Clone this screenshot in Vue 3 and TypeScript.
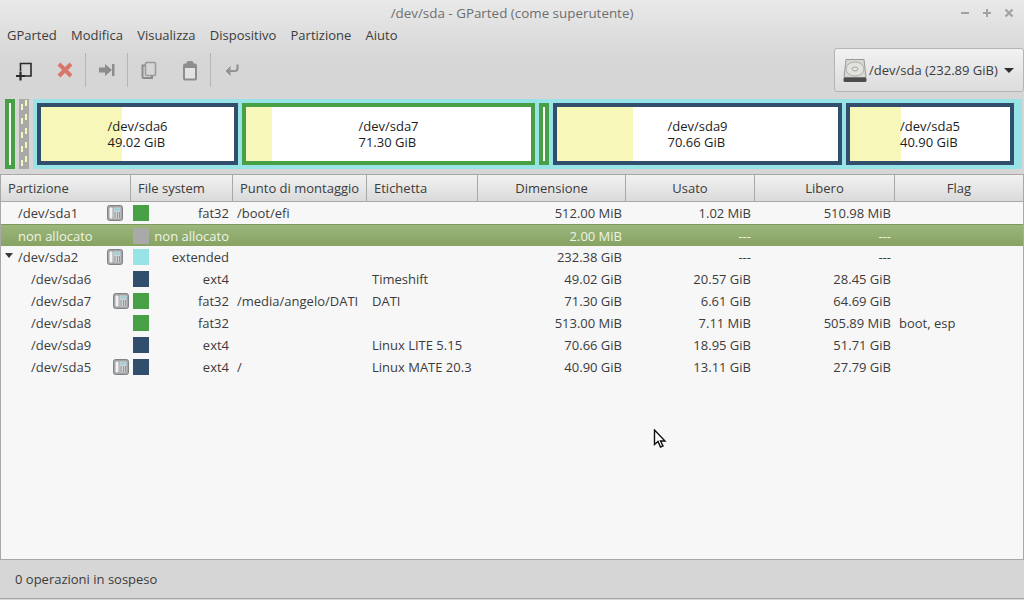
<template>
  <div class="window">
    <div class="titlebar">
      <span class="title">/dev/sda - GParted (come superutente)</span>
      <div class="win-buttons">
        <svg width="10" height="10" viewBox="0 0 10 10"><path d="M1 5h8" stroke="#a2a2a2" stroke-width="2" /></svg>
        <svg width="10" height="10" viewBox="0 0 10 10"><path d="M1 5h8M5 1v8" stroke="#a2a2a2" stroke-width="2" /></svg>
        <svg width="10" height="10" viewBox="0 0 10 10"><path d="M1.5 1.5l7 7M8.5 1.5l-7 7" stroke="#a2a2a2" stroke-width="2.2" /></svg>
      </div>
    </div>

    <nav class="menubar">
      <span v-for="m in menus" :key="m">{{ m }}</span>
    </nav>

    <div class="toolbar">
      <div class="tools">
        <button class="tool">
          <svg width="22" height="22" viewBox="0 0 22 22" fill="none" stroke="#2b2b2b">
            <path d="M7.500 12V4.500h10.500v12.500h-6" stroke-width="1.600" />
            <path d="M3 17h9M7.500 12.500v9" stroke-width="2.200" />
          </svg>
        </button>
        <button class="tool">
          <svg width="22" height="22" viewBox="0 0 22 22"><path d="M5 5l12 12M17 5L5 17" stroke="#d9766a" stroke-width="4" /></svg>
        </button>
        <i class="sep"></i>
        <button class="tool">
          <svg width="22" height="22" viewBox="0 0 22 22" fill="#8c8c8c"><path d="M3 8.500h6V5l7 6-7 6v-3.500H3z" /><rect x="16" y="5" width="2.500" height="12" /></svg>
        </button>
        <i class="sep"></i>
        <button class="tool">
          <svg width="22" height="22" viewBox="0 0 22 22" fill="none" stroke="#9a9a9a" stroke-width="1.500">
            <rect x="7.500" y="3.500" width="10" height="13" rx="1" />
            <path d="M7 6.500H4.500v11.500a1 1 0 0 0 1 1h8.500v-2.500" stroke="#8c8c8c" stroke-width="2" />
          </svg>
        </button>
        <button class="tool">
          <svg width="22" height="22" viewBox="0 0 22 22">
            <rect x="4" y="4.500" width="14" height="17" rx="2" fill="#8d8d8d" />
            <rect x="7.500" y="2" width="7" height="5" rx="2" fill="#8d8d8d" />
            <rect x="6" y="9" width="10" height="10.500" fill="#e2e2e2" />
          </svg>
        </button>
        <i class="sep"></i>
        <button class="tool">
          <svg width="22" height="22" viewBox="0 0 22 22" fill="none" stroke="#939393" stroke-width="2.200">
            <path d="M16.500 5.500v4a2.500 2.500 0 0 1-2.500 2.500H7" />
            <path d="M9.500 7.500L5 12l4.500 4.500" fill="#939393" stroke-width="1" />
          </svg>
        </button>
      </div>
      <button class="device">
        <svg width="25" height="25" viewBox="0 0 25 25">
          <path d="M3 1.500h18l2 18H1z" fill="#d8d8d3" stroke="#9a9a96" />
          <ellipse cx="12" cy="11" rx="9" ry="7" fill="#e2e2de" stroke="#adada9" />
          <ellipse cx="12" cy="11" rx="3" ry="2" fill="none" stroke="#a5a5a1" />
          <rect x="0.500" y="19.500" width="23" height="4.500" rx="1.500" fill="#4d4d4d" />
        </svg>
        <span>/dev/sda (232.89 GiB)</span>
        <i class="caret"></i>
      </button>
    </div>

    <section class="diskmap">
      <div class="part solo fat"></div>
      <div class="part solo unalloc"></div>
      <div class="extended">
        <div
          v-for="p in bars"
          :key="p.name"
          class="part"
          :class="p.fs"
          :style="{ width: p.width + 'px' }"
        >
          <div class="usage" :style="{ width: p.used + 'px' }"></div>
          <div v-if="p.name" class="bar-label">{{ p.name }}<br />{{ p.size }}</div>
        </div>
      </div>
    </section>

    <main class="table">
      <div class="row head">
        <div v-for="h in headers" :key="h.label" :class="{ center: h.center }">{{ h.label }}</div>
      </div>
      <div
        v-for="r in rows"
        :key="r.name"
        class="row body"
        :class="{ selected: r.selected }"
      >
        <div class="c-part" :class="{ child: r.child }">
          <i v-if="r.open" class="expander"></i>
          <span>{{ r.name }}</span>
          <svg v-if="r.lock" class="key" width="16" height="16" viewBox="0 0 16 16">
            <rect x="0.500" y="0.500" width="15" height="15" rx="2" fill="#a3a5a6" stroke="#808385" />
            <rect x="2.500" y="2.500" width="3" height="11" rx="1" fill="#f1f2f3" />
            <rect x="6.500" y="2.500" width="7" height="11" fill="#d0d2d3" />
            <rect x="7.500" y="3.500" width="5" height="2" fill="#8fd0e2" />
            <path d="M7.500 8h1M10 8h1M12 8h1M7.500 10h1M10 10h1M12 10h1M7.500 12h1M10 12h1M12 12h1" stroke="#55595c" />
          </svg>
        </div>
        <div class="c-fs">
          <i class="swatch" :class="r.color"></i>
          <span>{{ r.fs }}</span>
        </div>
        <div class="c-text">{{ r.mount }}</div>
        <div class="c-text label">{{ r.label }}</div>
        <div class="c-num">{{ r.size }}</div>
        <div class="c-num">{{ r.used }}</div>
        <div class="c-num">{{ r.free }}</div>
        <div class="c-text">{{ r.flag }}</div>
      </div>

      <svg class="cursor" width="14" height="20" viewBox="0 0 14 20">
        <path d="M1.500 1v14.500l3.500-3 2.500 5.500 2.500-1-2.500-5h4.500z" fill="#fff" stroke="#111" stroke-width="1.400" />
      </svg>
    </main>

    <footer class="statusbar">0 operazioni in sospeso</footer>
  </div>
</template>

<script setup lang="ts">
interface Row {
  name: string
  fs: string
  color: string
  mount?: string
  label?: string
  size: string
  used: string
  free: string
  flag?: string
  lock?: boolean
  child?: boolean
  open?: boolean
  selected?: boolean
}

const menus = ['GParted', 'Modifica', 'Visualizza', 'Dispositivo', 'Partizione', 'Aiuto']

const headers = [
  { label: 'Partizione' },
  { label: 'File system' },
  { label: 'Punto di montaggio' },
  { label: 'Etichetta' },
  { label: 'Dimensione', center: true },
  { label: 'Usato', center: true },
  { label: 'Libero', center: true },
  { label: 'Flag', center: true }
]

const bars = [
  { name: '/dev/sda6', size: '49.02 GiB', fs: 'ext4', width: 201, used: 81 },
  { name: '/dev/sda7', size: '71.30 GiB', fs: 'fat', width: 293, used: 26 },
  { name: '', size: '', fs: 'fat thin', width: 10, used: 0 },
  { name: '/dev/sda9', size: '70.66 GiB', fs: 'ext4', width: 289, used: 76 },
  { name: '/dev/sda5', size: '40.90 GiB', fs: 'ext4', width: 168, used: 51 }
]

const rows: Row[] = [
  { name: '/dev/sda1', fs: 'fat32', color: 'green', mount: '/boot/efi', size: '512.00 MiB', used: '1.02 MiB', free: '510.98 MiB', lock: true },
  { name: 'non allocato', fs: 'non allocato', color: 'grey', size: '2.00 MiB', used: '---', free: '---', selected: true },
  { name: '/dev/sda2', fs: 'extended', color: 'cyan', size: '232.38 GiB', used: '---', free: '---', lock: true, open: true },
  { name: '/dev/sda6', fs: 'ext4', color: 'navy', label: 'Timeshift', size: '49.02 GiB', used: '20.57 GiB', free: '28.45 GiB', child: true },
  { name: '/dev/sda7', fs: 'fat32', color: 'green', mount: '/media/angelo/DATI', label: 'DATI', size: '71.30 GiB', used: '6.61 GiB', free: '64.69 GiB', lock: true, child: true },
  { name: '/dev/sda8', fs: 'fat32', color: 'green', size: '513.00 MiB', used: '7.11 MiB', free: '505.89 MiB', flag: 'boot, esp', child: true },
  { name: '/dev/sda9', fs: 'ext4', color: 'navy', label: 'Linux LITE 5.15', size: '70.66 GiB', used: '18.95 GiB', free: '51.71 GiB', child: true },
  { name: '/dev/sda5', fs: 'ext4', color: 'navy', mount: '/', label: 'Linux MATE 20.3', size: '40.90 GiB', used: '13.11 GiB', free: '27.79 GiB', lock: true, child: true }
]
</script>

<style>
html,
body {
  margin: 0;
  background: #d6d6d6;
}
</style>

<style scoped>
.window {
  width: 1024px;
  height: 600px;
  display: flex;
  flex-direction: column;
  overflow: hidden;
  font-family: 'Open Sans', 'Noto Sans', sans-serif;
  font-size: 13px;
  color: #3c3c3c;
  background: linear-gradient(180deg, #e9e9e9 0, #d6d6d6 60px);
}

.titlebar {
  height: 26px;
  flex: none;
  display: flex;
  align-items: center;
  justify-content: center;
  position: relative;
  color: #6e6e6e;
  font-size: 13.400px;
}

.win-buttons {
  position: absolute;
  right: 10px;
  top: 8px;
  display: flex;
  gap: 12px;
}

.win-buttons svg {
  display: block;
}

.menubar {
  height: 18px;
  flex: none;
  display: flex;
  align-items: center;
  gap: 14.300px;
  padding-left: 7px;
}

.toolbar {
  height: 50px;
  flex: none;
  display: flex;
  align-items: center;
  justify-content: space-between;
  padding-top: 2px;
  box-sizing: border-box;
}

.tools {
  display: flex;
  align-items: center;
  padding-left: 3px;
}

.tool {
  width: 41px;
  height: 34px;
  padding: 0;
  border: 0;
  background: none;
  display: flex;
  align-items: center;
  justify-content: center;
}

.sep {
  width: 1px;
  height: 34px;
  background: #b5b5b5;
}

.device {
  width: 190px;
  height: 44px;
  padding: 0 8px;
  display: flex;
  align-items: center;
  gap: 1px;
  border: 1px solid #b4b4b4;
  border-radius: 3px;
  background: linear-gradient(180deg, #f2f2f2, #dcdcdc);
  font: inherit;
  color: inherit;
  box-sizing: border-box;
}

.caret {
  width: 0;
  height: 0;
  margin-left: 5px;
  border: 5px solid transparent;
  border-top: 5px solid #2e2e2e;
  border-bottom: 0;
}

.diskmap {
  height: 80px;
  flex: none;
  display: flex;
  align-items: flex-start;
  gap: 4px;
  padding: 5px 0 0 5px;
  box-sizing: border-box;
}

.extended {
  width: 989px;
  height: 70px;
  padding: 4px 8px 4px 4px;
  display: flex;
  gap: 4px;
  background: #97e3e6;
  box-sizing: border-box;
}

.part {
  position: relative;
  height: 62px;
  background: #fff;
  border: 4px solid;
  box-sizing: border-box;
  display: flex;
  align-items: center;
  justify-content: center;
  overflow: hidden;
}

.part.solo {
  width: 10px;
  height: 70px;
}

.part.fat {
  border-color: #47a046;
}

.part.ext4 {
  border-color: #314e6c;
}

.part.unalloc {
  border: 1px solid #a9a9a9;
  background:
    repeating-linear-gradient(180deg, #f7f7b9 0 6px, transparent 6px 14px) 1px 4px / 2px 100% no-repeat,
    repeating-linear-gradient(180deg, #f7f7b9 0 6px, transparent 6px 14px) 5px 0 / 2px 100% no-repeat,
    #a9a9a9;
}

.usage {
  position: absolute;
  left: 0;
  top: 0;
  bottom: 0;
  background: #f7f7b9;
}

.bar-label {
  position: relative;
  color: #1c1c1c;
  line-height: 16px;
}

.table {
  flex: 1;
  position: relative;
  background: #f7f7f7;
  border: 1px solid #a8a8a8;
}

.row {
  display: grid;
  grid-template-columns: 130px 102px 134px 111px 148px 129px 140px 1fr;
  align-items: center;
}

.head {
  height: 26px;
  border-bottom: 1px solid #a8a8a8;
  background: linear-gradient(180deg, #f2f2f2, #dadada);
}

.head > div {
  height: 100%;
  display: flex;
  align-items: center;
  padding-left: 7px;
  border-right: 1px solid #a8a8a8;
  box-sizing: border-box;
}

.head > div:last-child {
  border-right: 0;
}

.head > .center {
  justify-content: center;
  padding-left: 0;
}

.body {
  height: 22px;
}

.selected {
  color: #eef3e6;
  background: linear-gradient(180deg, #9cb67b, #86a362);
  border-top: 1px solid #7f9a5c;
  box-sizing: border-box;
}

.c-part {
  position: relative;
  padding-left: 17px;
}

.c-part.child {
  padding-left: 30px;
}

.expander {
  position: absolute;
  left: 4px;
  top: 5px;
  border: 4px solid transparent;
  border-top: 5px solid #3a3a3a;
  border-bottom: 0;
}

.key {
  position: absolute;
  left: 106px;
  top: 1px;
}

.child .key {
  left: 112px;
}

.c-fs {
  display: flex;
  align-items: center;
  justify-content: space-between;
  padding: 0 4px 0 2px;
  white-space: nowrap;
}

.swatch {
  width: 16px;
  height: 16px;
  flex: none;
}

.swatch.green {
  background: #47a046;
}

.swatch.grey {
  background: #a9a9a9;
}

.swatch.cyan {
  background: #97e3e6;
}

.swatch.navy {
  background: #314e6c;
}

.c-text {
  padding-left: 4px;
  white-space: nowrap;
}

.c-text.label {
  padding-left: 5px;
}

.c-num {
  text-align: right;
  padding-right: 4px;
}

.cursor {
  position: absolute;
  left: 652px;
  top: 254px;
}

.statusbar {
  height: 39px;
  flex: none;
  display: flex;
  align-items: center;
  padding-left: 15px;
  border-bottom: 1px solid #a8a8a8;
  margin-bottom: 1px;
  box-sizing: border-box;
}
</style>
